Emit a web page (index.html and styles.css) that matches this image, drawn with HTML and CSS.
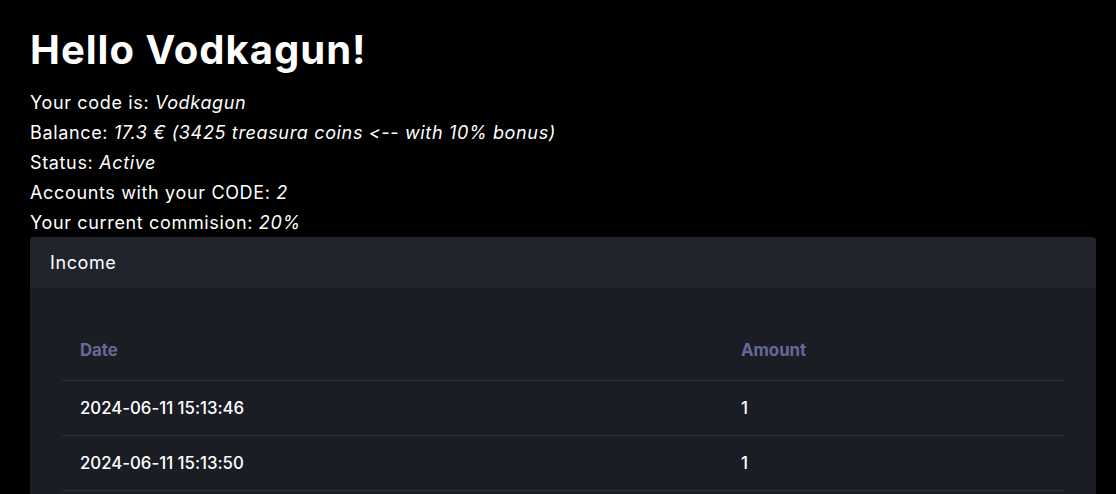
FILE: index.html
```html
<!DOCTYPE html>
<html>
<head>
<meta charset="utf-8">
<link rel="stylesheet" href="styles.css">
</head>
<body>
<main class="page">
  <h1 class="title">Hello Vodkagun!</h1>
  <div class="info">
    <p>Your code is: <em>Vodkagun</em></p>
    <p>Balance: <em>17.3 € (3425 treasura coins &lt;-- with 10% bonus)</em></p>
    <p>Status: <em>Active</em></p>
    <p>Accounts with your CODE: <em>2</em></p>
    <p>Your current commision: <em>20%</em></p>
  </div>
  <section class="card">
    <div class="card-header">Income</div>
    <div class="card-body">
      <table class="table">
        <thead>
          <tr><th class="col-date">Date</th><th>Amount</th></tr>
        </thead>
        <tbody>
          <tr><td>2024-06-11 15:13:46</td><td>1</td></tr>
          <tr><td>2024-06-11 15:13:50</td><td>1</td></tr>
        </tbody>
      </table>
    </div>
  </section>
</main>
</body>
</html>
```
FILE: styles.css
```css
html, body {
  margin: 0;
  padding: 0;
  background: #000;
  color: #fff;
}
.page {
  padding: 22px 20px 0 30px;
  font-family: Inter, "Noto Sans", sans-serif;
  font-variant-ligatures: none;
  font-feature-settings: "calt" 0, "liga" 0;
}
.title {
  margin: 0 0 10px;
  font-size: 40px;
  line-height: 56px;
  font-weight: 700;
  letter-spacing: 1px;
}
.info p {
  margin: 0;
  font-size: 18px;
  line-height: 30px;
  letter-spacing: 0.65px;
}
.info em {
  font-style: italic;
}
.card {
  margin-top: -1px;
  background: #1b1d24;
  border-radius: 4px;
  overflow: hidden;
}
.card-header {
  background: #21242c;
  height: 51px;
  padding: 0 20px;
  display: flex;
  align-items: center;
  font-size: 18px;
  letter-spacing: 0.6px;
}
.card-body {
  padding: 32px 32px 40px;
}
.table {
  width: 100%;
  border-collapse: collapse;
  font-size: 16.8px;
}
.table th {
  text-align: left;
  color: #646a96;
  font-weight: 700;
  height: 60px;
  padding: 0 18px;
  border-bottom: 1px solid #2c2f37;
}
.table td {
  height: 54px;
  padding: 0 18px;
  font-weight: 500;
  border-bottom: 1px solid #2c2f37;
}
.col-date {
  width: 625px;
}
```
